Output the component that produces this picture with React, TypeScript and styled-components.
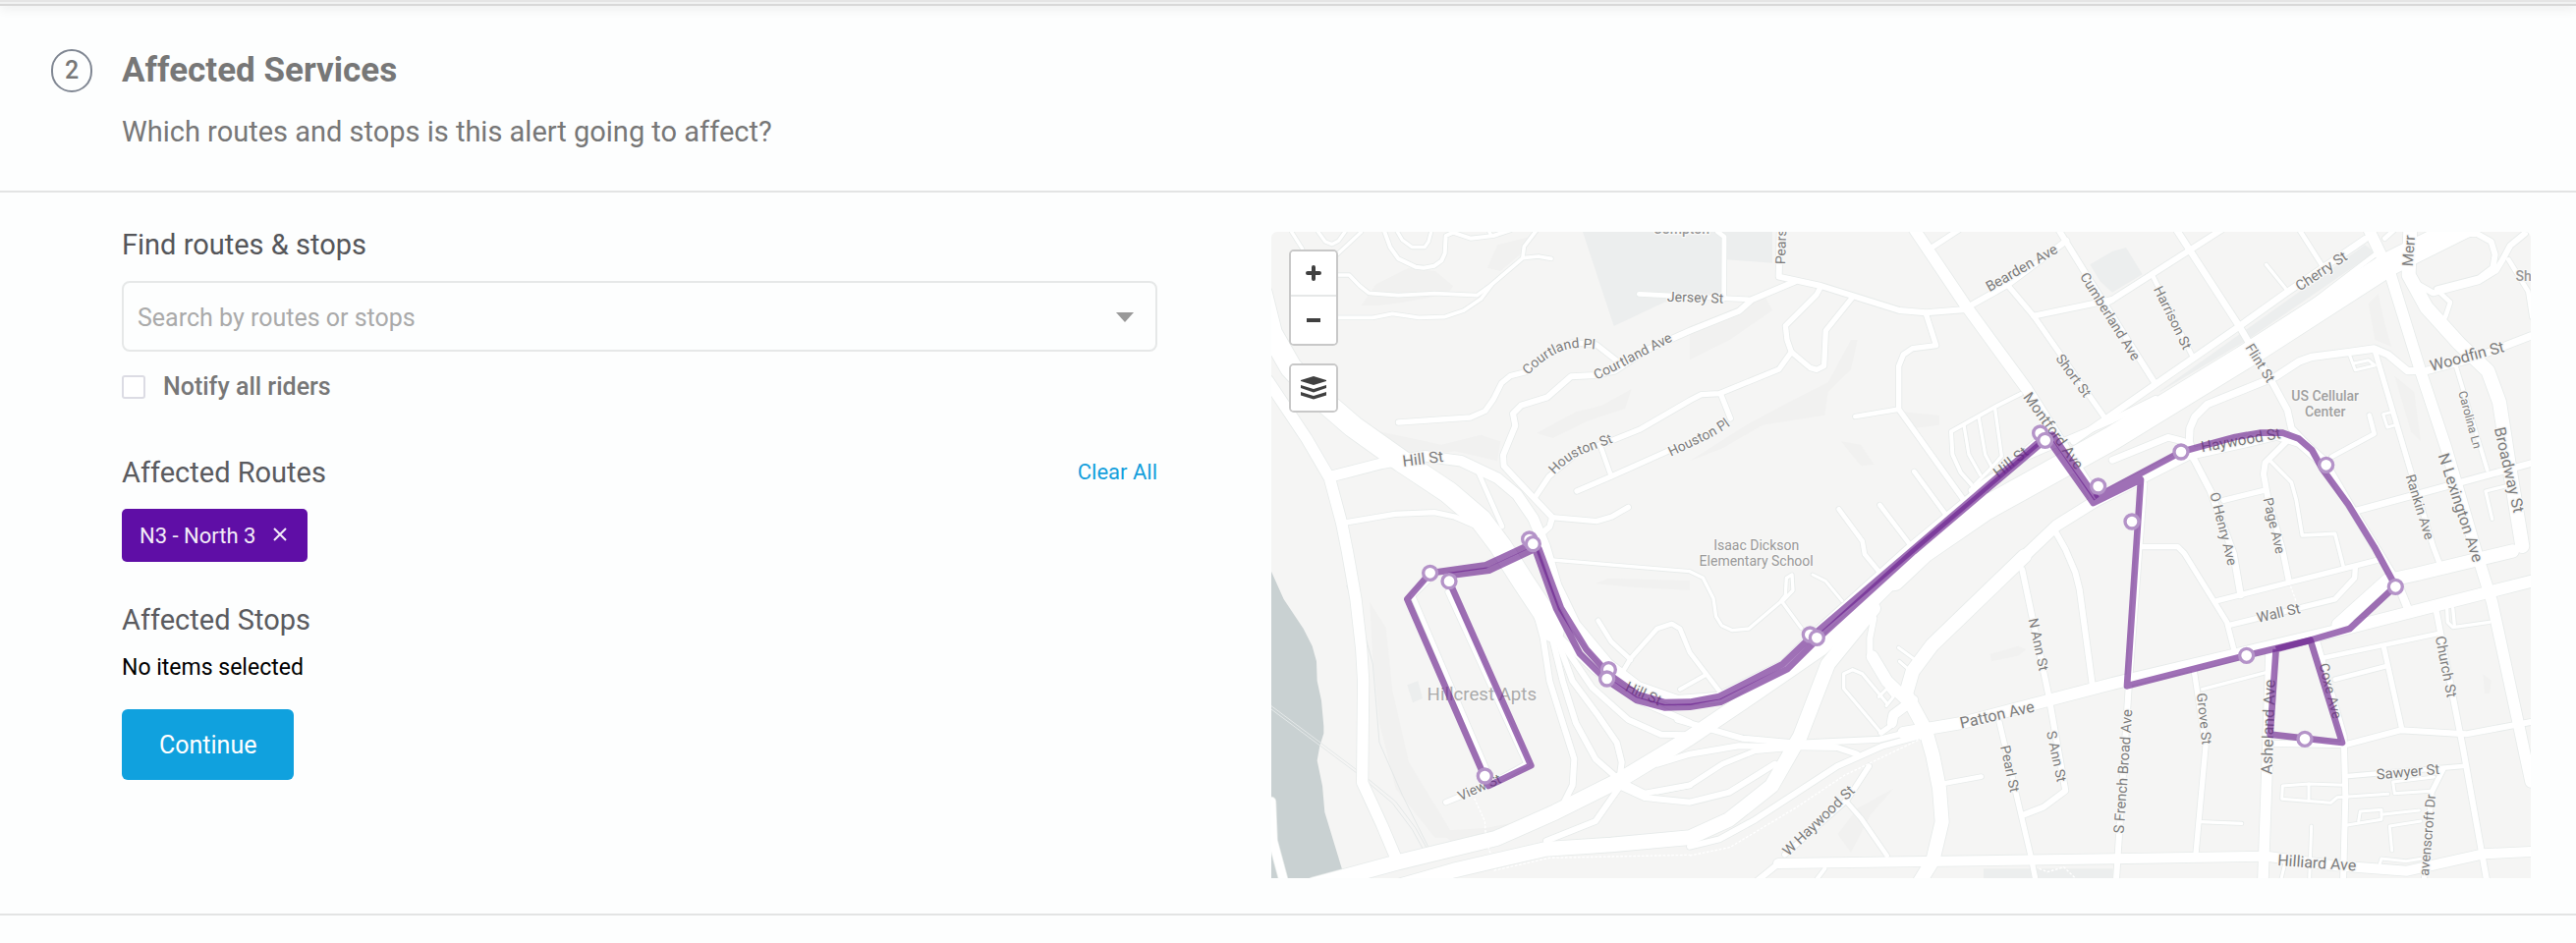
import React, { useState } from "react";
import styled, { createGlobalStyle } from "styled-components";

const GlobalStyle = createGlobalStyle`
  *, *::before, *::after { box-sizing: border-box; }
  body {
    margin: 0;
    background: #fdfefe;
    color: #000;
    font-family: Roboto, "Liberation Sans", sans-serif;
  }
  button, input { font: inherit; }
`;

/* ---------- page ---------- */

const PanelEdge = styled.div`
  height: 6px;
  border-top: 2px solid #e5e5e5;
  border-bottom: 2px solid #d8d8d8;
  background: #f1f2f2;
  box-shadow: 0 2px 12px rgba(0, 0, 0, 0.1);
`;

const Section = styled.section`
  border-bottom: 2px solid #e3e4e4;
`;

const Header = styled.header`
  display: flex;
  align-items: flex-start;
  gap: 30px;
  padding: 44px 46px 42px 52px;
  border-bottom: 2px solid #e3e4e4;
`;

const StepBadge = styled.span`
  display: flex;
  align-items: center;
  justify-content: center;
  width: 42px;
  height: 44px;
  border: 2px solid #808793;
  border-radius: 21px;
  color: #777;
  font-size: 25px;
  font-weight: 500;
  line-height: 40px;
`;

const HeaderText = styled.div`
  display: flex;
  flex-direction: column;
  gap: 22px;
`;

const Title = styled.h2`
  margin: 0;
  color: #777;
  font-size: 35px;
  font-weight: 700;
  line-height: 44px;
`;

const Subtitle = styled.p`
  margin: 0;
  color: #777;
  font-size: 29px;
  line-height: 36px;
`;

const Body = styled.div`
  display: grid;
  grid-template-columns: minmax(0, 1054fr) minmax(0, 1282fr);
  align-items: start;
  gap: 116px;
  padding: 40px 46px 36px 124px;
`;

/* ---------- form ---------- */

const Form = styled.form`
  display: flex;
  flex-direction: column;
  align-items: flex-start;
`;

const FieldLabel = styled.label`
  color: #55565a;
  font-size: 29px;
  line-height: 26px;
`;

const SearchBox = styled.div`
  display: flex;
  align-items: center;
  width: 100%;
  height: 72px;
  margin: 24px 0;
  padding: 0 14px;
  border: 2px solid #e6e8e8;
  border-radius: 8px;
`;

const SearchInput = styled.input`
  flex: 1;
  min-width: 0;
  height: 100%;
  padding: 2px 0 0;
  border: 0;
  outline: 0;
  background: transparent;
  color: #555;
  font-size: 25px;
  &::placeholder { color: #aaa; opacity: 1; }
`;

const CaretButton = styled.button`
  display: flex;
  padding: 10px 8px 8px;
  border: 0;
  background: none;
  cursor: pointer;
`;

const CheckRow = styled.label`
  display: flex;
  align-items: center;
  gap: 18px;
  height: 24px;
  color: #777;
  font-size: 25px;
  font-weight: 500;
  line-height: 24px;
`;

const Checkbox = styled.input`
  appearance: none;
  width: 24px;
  height: 24px;
  margin: 0;
  border: 2px solid #dcdce4;
  border-radius: 3px;
  background: #fff;
  &:checked { background: #10a1de; }
`;

const GroupHeader = styled.div<{ $space: number }>`
  display: flex;
  justify-content: space-between;
  align-items: center;
  width: 100%;
  height: 26px;
  margin: ${(p) => p.$space}px 0 24px;
`;

const GroupTitle = styled.h3`
  margin: 0;
  color: #5a5b5f;
  font-size: 29px;
  font-weight: 400;
  line-height: 26px;
`;

const ClearButton = styled.button`
  padding: 0;
  border: 0;
  background: none;
  color: #149fdc;
  font-size: 22px;
  line-height: 26px;
  cursor: pointer;
`;

const RouteTag = styled.span`
  display: inline-flex;
  align-items: center;
  gap: 18px;
  height: 54px;
  padding: 0 21px 0 18px;
  border-radius: 5px;
  background: #5f0ea6;
  color: #f3ecf8;
  font-size: 22px;
`;

const RemoveButton = styled.button`
  display: flex;
  padding: 0 0 2px;
  border: 0;
  background: none;
  color: inherit;
  cursor: pointer;
`;

const EmptyNote = styled.p`
  margin: 0 0 30px;
  font-size: 23px;
  line-height: 24px;
`;

const ContinueButton = styled.button`
  height: 72px;
  padding: 0 38px;
  border: 0;
  border-radius: 6px;
  background: #10a1de;
  color: #fff;
  font-size: 25px;
  cursor: pointer;
`;

/* ---------- map ---------- */

const MapFrame = styled.div`
  position: relative;
  overflow: hidden;
  aspect-ratio: 1282 / 658;
  border-radius: 6px 6px 0 0;
  background: #f5f5f4;
`;

const MapCanvas = styled.svg`
  display: block;
  width: 100%;
  height: 100%;
`;

const MapControls = styled.div`
  position: absolute;
  top: 18px;
  left: 18px;
  display: flex;
  flex-direction: column;
  gap: 18px;
`;

const ControlGroup = styled.div`
  display: flex;
  flex-direction: column;
  width: 50px;
  border: 2px solid #c8c8c8;
  border-radius: 5px;
  background: #fff;
  overflow: hidden;
`;

const ControlButton = styled.button<{ $height: number }>`
  display: flex;
  align-items: center;
  justify-content: center;
  height: ${(p) => p.$height}px;
  padding: 0;
  border: 0;
  background: #fff;
  color: #404040;
  cursor: pointer;
  & + & { border-top: 2px solid #e6e8e8; }
`;

const CASING = "#e7ebea";
const ROUTE = "#69208d";

/* Map drawing units: 3846 x 1974 */
const parks = [
  "951,0 1046,288 1200,215 1380,190 1390,85 1530,95 1530,0",
  "2500,100 2568,60 2610,48 2660,130 2568,185 2530,150",
  "2715,485 3340,40 3370,62 2980,330 2712,490",
  "2175,1945 2570,1945 2570,1974 2175,1974",
  "415,1384 448,1372 462,1425 432,1438",
];

const relief = [
  "275,225 320,160 420,110 500,120 555,165 540,190 400,215 330,225",
  "660,110 690,40 810,10 770,60 700,120",
  "205,520 330,610 520,650 640,620 700,640 690,700 560,670 420,690 330,640 230,590",
  "810,615 930,550 1010,530 1100,480 1080,540 960,580 860,630",
  "1278,310 1400,240 1510,200 1530,240 1400,330 1278,390",
  "1278,700 1450,590 1600,510 1700,460 1770,330 1790,330 1770,420 1700,490 1690,560 1500,590 1380,660",
  "1740,640 1800,650 1840,710 1800,715",
  "1930,550 2040,560 2040,590 1960,600",
  "990,1075 1030,1058 1278,1065 1278,1095 1100,1085",
  "300,1130 350,1210 370,1400 420,1620 560,1850 500,1850 380,1700 330,1500 310,1300",
  "510,1830 660,1820 760,1800 660,1850 560,1870",
  "2195,1290 2280,1265 2305,1275 2280,1295 2200,1312",
  "1730,1840 1790,1760 1900,1700 1830,1780 1770,1895",
  "3350,220 3380,190 3400,280 3420,350 3370,330",
  "3430,440 3490,490 3510,640 3480,610",
  "3700,1350 3725,1370 3720,1410 3705,1410",
];

const streets: [number, string][] = [
  [10, "62,0 95,52"],
  [10, "143,0 165,30 185,38 205,28 225,0"],
  [10, "275,0 200,70"],
  [12, "346,0 363,47 388,82 440,107 465,110 498,104 520,88 530,66 533,12 555,2 608,20 678,12 730,-5"],
  [10, "663,-5 672,12"],
  [10, "385,0 400,25 430,47 468,47 480,30 488,0"],
  [11, "200,132 238,132 270,165 298,187 388,194 500,188 628,194 668,165 768,80 815,75 855,82"],
  [11, "768,78 772,45 810,-5"],
  [11, "673,162 640,205 588,240 528,260 450,262 370,250 310,262 200,262"],
  [16, "388,582 608,567 653,547 678,512 703,462 730,440 780,427 850,365 920,338 993,345 1063,400"],
  [18, "828,920 850,900 858,872 758,767 710,715 708,682 745,592 738,555 763,530 843,505 915,442 988,438 1048,425 1148,360 1278,302 1428,242 1468,207 1598,152"],
  [16, "858,872 993,884 1040,870 1090,841"],
  [16, "808,807 848,747 938,672 1035,640 1128,602 1278,515 1313,497 1368,494 1550,420 1588,367 1575,330 1570,287 1665,192 1678,167"],
  [16, "933,792 1038,747 1210,670 1300,640"],
  [16, "1402,570 1372,494"],
  [14, "1038,747 1008,662"],
  [16, "225,888 378,862 498,857 560,870 640,905"],
  [14, "633,737 705,900"],
  [14, "1123,190 1468,207"],
  [14, "1363,0 1383,15 1382,205"],
  [18, "1553,-5 1550,137 1678,165 1918,240 1998,247 2112,238 2248,162 2428,27"],
  [16, "1773,202 1693,302 1688,410 1665,421 1645,415 1588,367"],
  [16, "1998,247 2030,347 1958,356 1930,375 1916,410 1916,542 2113,817"],
  [14, "1916,542 1783,564"],
  [14, "1963,732 2060,864"],
  [14, "1858,834 1950,955"],
  [14, "1733,847 1805,945 1812,985 1858,1040"],
  [16, "2018,47 2098,-5"],
  [12, "2288,495 2218,530 2076,610 2080,680 2105,735 2145,780"],
  [10, "2115,590 2130,680 2165,742"],
  [10, "2160,565 2180,680 2200,718"],
  [10, "2210,540 2230,685 2200,720 2150,770"],
  [18, "2405,-5 2488,130 2700,465"],
  [16, "2248,162 2328,257 2548,572"],
  [18, "2328,257 2568,207"],
  [18, "2540,222 2568,207 2803,57 2900,-5"],
  [20, "2450,640 2568,558 2698,467 2958,287 3098,187 3340,22"],
  [14, "2960,360 3180,215 3370,70"],
  [14, "2693,137 2815,385"],
  [10, "3038,100 3103,180"],
  [14, "3140,-5 3208,102"],
  [20, "2765,-5 2958,292 3058,462 3103,545 3115,600 3220,710"],
  [18, "2138,790 2278,700 2568,575 2700,510"],
  [20, "2568,697 2738,628 2785,640 2815,690 2868,792 2938,982 2960,1110"],
  [22, "2815,690 2803,640 2805,600 2820,565 2858,527 3068,442 3140,395 3178,382 3288,368 3368,357 3410,375 3440,400 3470,425 3528,424 3660,390 3846,318"],
  [18, "2398,922 2425,970 2455,1040 2468,1092 2508,1390"],
  [16, "3368,357 3423,542 3548,962 3570,1020"],
  [12, "3618,412 3713,727"],
  [20, "3313,852 3846,707"],
  [10, "3768,777 3708,792 3728,877"],
  [14, "3238,687 3368,617 3353,560"],
  [9, "3293,377 3310,422 3370,408 3350,392 3305,402"],
  [9, "3423,550 3395,557 3408,597 3433,590"],
  [18, "3098,642 3035,705 3030,740 3043,812 3088,972 3108,1070"],
  [16, "2908,820 3030,790"],
  [11, "3053,702 3115,765 3130,820 3148,927 3248,922 3273,1020"],
  [18, "2665,770 2618,1392 2580,1980"],
  [16, "2650,962 2768,962 2788,982 2918,1192 2943,1290"],
  [16, "2888,1127 3388,1000"],
  [16, "2923,1202 3248,1122 3308,1057 3310,1025"],
  [16, "2818,1342 2853,1572 2823,1900"],
  [10, "2843,1397 3033,1347"],
  [10, "2838,1802 2963,1807"],
  [32, "3053,1280 3043,1572 3028,1990"],
  [18, "3048,1562 3278,1567 3448,1522 3648,1534 3846,1497"],
  [18, "3193,1252 3275,1540 3280,1722 3273,1990"],
  [14, "3208,1302 3563,1227"],
  [14, "3248,1367 3403,1327"],
  [16, "3398,1272 3453,1522"],
  [18, "3558,1162 3638,1572 3713,1990"],
  [10, "3590,1150 3592,1192 3608,1208 3720,1192"],
  [10, "3608,1150 3613,1200"],
  [14, "3288,1662 3638,1632"],
  [16, "3578,1642 3543,1712 3520,1980"],
  [9, "3280,1690 3168,1686 3088,1692 3086,1732 3235,1744 3255,1727 3410,1717"],
  [9, "3168,1686 3168,1735"],
  [9, "3550,1665 3425,1680 3430,1715 3540,1708"],
  [9, "3285,1812 3390,1795 3390,1765 3325,1770 3320,1800"],
  [9, "3390,1780 3505,1767"],
  [9, "3510,1800 3415,1815 3422,1890"],
  [9, "3176,1815 3170,1980"],
  [9, "3095,1930 3083,1980"],
  [9, "3385,1930 3390,1914 3465,1922 3510,1915"],
  [16, "1568,1902 1758,1735 1825,1632"],
  [14, "1758,1742 1800,1790 1880,1905"],
  [18, "1480,1985 1548,1930"],
  [12, "1660,1985 1690,1945"],
  [18, "2293,1032 2373,1412 2425,1707 2358,1757 2298,1780"],
  [16, "2223,1497 2318,1902 2335,1985"],
  [14, "2058,1684 2168,1664"],
  [10, "1862,1530 1748,1395 1748,1350 1775,1337 1805,1350 1880,1440"],
  [9, "1855,1420 1880,1395 1900,1420 1878,1448"],
  [9, "1915,1270 1970,1310"],
  [9, "1918,1312 1950,1340"],
  [18, "1840,1180 1828,1240 1828,1292"],
  [16, "1950,1425 1898,1480 1890,1510 1862,1530"],
  [18, "1240,1490 1438,1547 1608,1562 1858,1550 1978,1520"],
  [18, "1180,1625 1278,1595 1428,1570 1728,1575 1788,1595"],
  [18, "1998,1535 1868,1570 1728,1632 1478,1795 1368,1855 1278,1877"],
  [16, "1180,1710 1278,1690 1378,1625 1478,1585 1598,1575"],
  [18, "1068,1695 1140,1728 1278,1742 1398,1712 1538,1625"],
  [10, "858,1002 1278,1037 1318,1057 1350,1120 1358,1175 1375,1202 1408,1217 1458,1212 1553,1132 1570,1110 1573,1057 1590,1047 1593,1095 1560,1130 1618,1210"],
  [9, "1653,1047 1693,1067 1743,1127"],
  [14, "1068,1352 1098,1302 1178,1212 1223,1197 1248,1212 1278,1285 1368,1402"],
  [14, "998,1187 1038,1252 1098,1307"],
  [12, "1248,1397 1328,1352"],
  [16, "533,1742 668,1687 780,1625 540,1100"],
  [14, "485,1060 432,1112 670,1670"],
  [18, "800,1130 830,1240 850,1372 890,1500 925,1610 920,1690 880,1770"],
  [18, "850,1210 890,1372 930,1500 990,1610 1070,1680 1140,1715 1278,1690"],
  [18, "860,1210 920,1372 1000,1480 1055,1560 1070,1620 1060,1700 990,1800 840,1860"],
  [18, "870,1230 980,1392 1090,1490 1190,1535 1278,1537"],
  [20, "870,1230 990,1342 1120,1430 1278,1500"],
  [14, "3570,187 3600,215 3585,260"],
  [14, "3778,85 3838,182 3850,260"],
  [18, "3500,160 3548,187 3688,150 3740,118 3760,85 3783,42 3828,5"],
  [18, "3590,10 3680,5 3725,30 3737,70 3730,110 3688,142 3560,175"],
  [14, "3400,20 3428,-5"],
];

const arterials: [number, string][] = [
  [34, "-10,455 108,632 178,752 215,890 233,980 258,1122 275,1272 281,1372 278,1682 338,1812 388,1930"],
  [32, "183,747 338,707 468,685 580,700 690,752 750,802 800,875 835,960 870,1080 928,1200 1028,1320 1120,1390 1240,1432 1368,1422 1568,1322 1658,1232 1958,962 2358,632"],
  [34, "1962,-10 2118,222 2308,482 2515,810"],
  [34, "2300,990 2398,897 2518,822 2650,755 2798,680 2980,640 3070,618 3140,640 3220,710"],
  [24, "3220,710 3290,830 3440,1075 3470,1150"],
  [42, "2300,990 2018,1262 1958,1342 1938,1412 1998,1522 2020,1600 2040,1700 2048,1802 2020,1920 1980,1985"],
  [36, "1835,1297 1880,1372 1940,1430"],
  [30, "1960,1430 1900,1475 1895,1500"],
  [36, "1930,1530 2108,1500 2568,1380 3288,1210 3856,1065"],
  [40, "3258,1200 3408,1065 3500,1045 3790,975"],
  [34, "3350,-10 3418,132 3508,422 3588,662 3678,972 3728,1132 3808,1502 3846,1680"],
  [42, "3478,-10 3473,132 3528,232 3628,342 3715,425 3750,520 3778,702 3820,960"],
  [30, "1548,1929 2568,1915 3038,1907 3240,1935 3468,1952 3700,1900 3846,1893"],
  [26, "0,1740 5,1860 40,1990"],
];

const motorways: [number, string][] = [
  [66, "-30,190 0,310 60,415 140,500 250,595 400,702 540,795 640,880 700,960 770,1070 830,1160 860,1220"],
  [44, "1838,1150 1700,1320 1615,1540 1528,1692 1398,1795 1278,1850 1038,1872 838,1885 558,1950 400,1995"],
  [46, "130,1995 388,1925 688,1852 868,1772 1068,1672 1278,1545 1478,1410 1678,1272 1838,1122 1990,970 2180,820"],
  [72, "1900,1060 1990,975 2180,845 2568,630 2968,385 3418,95 3650,-20"],
];

const routeLines = [
  "485,1042 655,1018 800,950 818,970 885,1150 962,1275 1032,1352 1118,1413 1200,1437 1278,1436 1368,1419 1562,1320 1650,1235 1960,970 2355,632 2385,620 2520,815",
  "543,1067 543,1050 665,1034 805,968 870,1150 942,1288 1022,1368 1115,1430 1200,1453 1278,1451 1372,1436 1575,1336 1672,1240 1962,976 2370,630 2510,828 2655,757 2613,1387 2978,1294 3173,1247 3293,1212 3433,1082 3368,962 3288,832 3208,722 3178,667 3138,632 3088,614 3018,614 2943,627 2868,647 2778,672 2515,812",
  "485,1042 415,1122 663,1692 793,1630 543,1067",
  "3068,1275 3173,1247 3270,1560 3155,1547 3050,1535 3068,1275",
];

const stops: [number, number][] = [
  [788, 939], [799, 953], [485, 1042], [543, 1067], [1030, 1337], [1025, 1365],
  [652, 1662], [1645, 1230], [1666, 1240], [2348, 615], [2363, 637], [2525, 777],
  [2778, 672], [3221, 712], [2628, 885], [3433, 1084], [2978, 1294], [3156, 1549],
];

type StreetName = { t: string; x: number; y: number; a: number; s: number };
const streetNames: StreetName[] = [
  { t: "Hill St", x: 463, y: 693, a: -7, s: 48 },
  { t: "Jersey St", x: 1295, y: 200, a: 2, s: 42 },
  { t: "Pears", x: 1556, y: 46, a: -88, s: 42 },
  { t: "Bearden Ave", x: 2291, y: 110, a: -30, s: 44 },
  { t: "Cumberland Ave", x: 2562, y: 258, a: 58, s: 42 },
  { t: "Harrison St", x: 2753, y: 262, a: 64, s: 42 },
  { t: "Cherry St", x: 3206, y: 120, a: -34, s: 44 },
  { t: "Flint St", x: 3020, y: 400, a: 58, s: 42 },
  { t: "Short St", x: 2450, y: 439, a: 54, s: 42 },
  { t: "Montford Ave", x: 2388, y: 608, a: 54, s: 46 },
  { t: "Hill St", x: 2258, y: 704, a: -38, s: 46 },
  { t: "Woodfin St", x: 3651, y: 380, a: -15, s: 48 },
  { t: "Merr", x: 3474, y: 58, a: -86, s: 46 },
  { t: "Carolina Ln", x: 3660, y: 574, a: 75, s: 36 },
  { t: "Broadway St", x: 3780, y: 727, a: 77, s: 48 },
  { t: "N Lexington Ave", x: 3632, y: 842, a: 72, s: 48 },
  { t: "Rankin Ave", x: 3508, y: 840, a: 73, s: 42 },
  { t: "O Henry Ave", x: 2908, y: 907, a: 76, s: 42 },
  { t: "Page Ave", x: 3063, y: 897, a: 77, s: 42 },
  { t: "Haywood St", x: 2960, y: 637, a: -10, s: 46 },
  { t: "Wall St", x: 3075, y: 1164, a: -13, s: 44 },
  { t: "Patton Ave", x: 2216, y: 1475, a: -13, s: 48 },
  { t: "N Ann St", x: 2343, y: 1260, a: 78, s: 42 },
  { t: "S Ann St", x: 2398, y: 1602, a: 78, s: 42 },
  { t: "Pearl St", x: 2256, y: 1640, a: 78, s: 42 },
  { t: "W Haywood St", x: 1671, y: 1798, a: -44, s: 44 },
  { t: "S French Broad Ave", x: 2601, y: 1648, a: -86, s: 44 },
  { t: "Grove St", x: 2849, y: 1487, a: 84, s: 42 },
  { t: "Asheland Ave", x: 3044, y: 1512, a: -88, s: 48 },
  { t: "Coxe Ave", x: 3235, y: 1402, a: 76, s: 42 },
  { t: "Church St", x: 3587, y: 1328, a: 79, s: 44 },
  { t: "Sawyer St", x: 3471, y: 1649, a: -5, s: 44 },
  { t: "avenscroft Dr", x: 3530, y: 1842, a: -85, s: 42 },
  { t: "Hilliard Ave", x: 3193, y: 1927, a: 4, s: 48 },
  { t: "View St", x: 635, y: 1696, a: -24, s: 42 },
  { t: "Hill St", x: 1137, y: 1410, a: 24, s: 44 },
];

const curvedNames = [
  { id: "courtland-pl", t: "Courtland Pl", d: "M784,438 Q855,362 930,354 L1050,364" },
  { id: "courtland-ave", t: "Courtland Ave", d: "M993,452 Q1040,430 1100,398 L1270,310" },
  { id: "houston-st", t: "Houston St", d: "M864,742 Q910,692 960,674 L1090,626" },
  { id: "houston-pl", t: "Houston Pl", d: "M1220,686 L1330,634 Q1390,606 1440,560" },
];

const places: { t: string; x: number; y: number; s: number; c: string; w: number }[] = [
  { t: "Compton", x: 1252, y: -8, s: 42, c: "#999", w: 500 },
  { t: "US Cellular", x: 3218, y: 502, s: 42, c: "#a0a0a0", w: 500 },
  { t: "Center", x: 3218, y: 548, s: 42, c: "#a0a0a0", w: 500 },
  { t: "Isaac Dickson", x: 1481, y: 958, s: 42, c: "#999", w: 400 },
  { t: "Elementary School", x: 1481, y: 1004, s: 42, c: "#999", w: 400 },
  { t: "Hillcrest Apts", x: 643, y: 1412, s: 56, c: "#aaa", w: 400 },
  { t: "Sh", x: 3824, y: 135, s: 42, c: "#999", w: 500 },
];

const StreetText = styled.text`
  fill: #7c7c7c;
  stroke: #f8f8f7;
  stroke-width: 8px;
  stroke-linejoin: round;
  paint-order: stroke;
  font-family: Roboto, sans-serif;
`;

function RoadLayer({ lines }: { lines: [number, string][] }) {
  return (
    <g fill="none" strokeLinejoin="round" strokeLinecap="round">
      {lines.map(([w, p], i) => (
        <polyline key={`c${i}`} points={p} stroke={CASING} strokeWidth={w + 5} />
      ))}
      {lines.map(([w, p], i) => (
        <polyline key={`f${i}`} points={p} stroke="#fff" strokeWidth={w} />
      ))}
    </g>
  );
}

function TransitMap() {
  return (
    <MapCanvas viewBox="0 0 3846 1974" preserveAspectRatio="xMidYMid slice" role="img" aria-label="Route map">
      <g fill="#f1f1f0">{relief.map((p) => <polygon key={p} points={p} />)}</g>
      <g fill="#eceeee">{parks.map((p) => <polygon key={p} points={p} />)}</g>
      <polygon
        fill="#c9d1d2"
        points="0,1037 38,1122 98,1212 125,1265 138,1312 140,1372 153,1432 160,1510 160,1532 148,1570 140,1615 156,1692 163,1772 220,1960 215,1974 0,1974"
      />
      <g fill="none" stroke="#e4e8e8" strokeWidth="3">
        <polyline points="0,1448 150,1560 270,1650 380,1740 440,1820 490,1910" />
        <polyline points="0,1458 150,1570 270,1660 370,1745 430,1825 478,1912" />
        <polyline points="230,1080 275,1190 310,1320 330,1560 400,1720 480,1880" />
      </g>
      <RoadLayer lines={[...streets, ...arterials, ...motorways]} />
      <g fill="none" stroke="#fff" strokeWidth="4" strokeDasharray="8 5">
        <polyline points="620,1730 652,1800 656,1860 680,1930" />
        <polyline points="1278,1905 1400,1880 1600,1760 1750,1660 1990,1545" />
        <polyline points="680,1950 850,1912 1278,1903" />
        <polyline points="3108,1070 3130,1130" />
        <polyline points="2345,1945 2370,1955 2420,1940 2455,1974" />
      </g>
      {streetNames.map((n) => (
        <StreetText
          key={n.t + n.x}
          transform={`translate(${n.x} ${n.y}) rotate(${n.a})`}
          fontSize={n.s}
          textAnchor="middle"
          dominantBaseline="central"
        >
          {n.t}
        </StreetText>
      ))}
      {curvedNames.map((n) => (
        <React.Fragment key={n.id}>
          <path id={n.id} d={n.d} fill="none" />
          <StreetText fontSize={42}>
            <textPath href={`#${n.id}`}>{n.t}</textPath>
          </StreetText>
        </React.Fragment>
      ))}
      {places.map((n) => (
        <StreetText
          key={n.t}
          x={n.x}
          y={n.y}
          fontSize={n.s}
          fontWeight={n.w}
          textAnchor="middle"
          dominantBaseline="central"
          style={{ fill: n.c }}
        >
          {n.t}
        </StreetText>
      ))}
      <g fill="none" stroke={ROUTE} strokeOpacity="0.64" strokeWidth="20" strokeLinejoin="round">
        {routeLines.map((p) => <polyline key={p} points={p} />)}
      </g>
      <g fill="#fff" stroke="#b493c8" strokeWidth="10">
        {stops.map(([x, y]) => <circle key={`${x}-${y}`} cx={x} cy={y} r="21" />)}
      </g>
    </MapCanvas>
  );
}

export default function App() {
  const [query, setQuery] = useState("");
  const [notifyAll, setNotifyAll] = useState(false);

  return (
    <>
      <GlobalStyle />
      <PanelEdge />
      <Section>
        <Header>
          <StepBadge>2</StepBadge>
          <HeaderText>
            <Title>Affected Services</Title>
            <Subtitle>Which routes and stops is this alert going to affect?</Subtitle>
          </HeaderText>
        </Header>
        <Body>
          <Form onSubmit={(e) => e.preventDefault()}>
            <FieldLabel htmlFor="search">Find routes &amp; stops</FieldLabel>
            <SearchBox>
              <SearchInput
                id="search"
                type="text"
                placeholder="Search by routes or stops"
                value={query}
                onChange={(e) => setQuery(e.target.value)}
              />
              <CaretButton type="button" aria-label="Show options">
                <svg width="18" height="10" viewBox="0 0 18 10">
                  <path d="M0 0H18L9 10Z" fill="#999" />
                </svg>
              </CaretButton>
            </SearchBox>
            <CheckRow>
              <Checkbox type="checkbox" checked={notifyAll} onChange={(e) => setNotifyAll(e.target.checked)} />
              Notify all riders
            </CheckRow>
            <GroupHeader $space={62}>
              <GroupTitle>Affected Routes</GroupTitle>
              <ClearButton type="button">Clear All</ClearButton>
            </GroupHeader>
            <RouteTag>
              N3 - North 3
              <RemoveButton type="button" aria-label="Remove N3 - North 3">
                <svg width="14" height="14" viewBox="0 0 14 14" stroke="currentColor" strokeWidth="2">
                  <path d="M1 1L13 13M13 1L1 13" />
                </svg>
              </RemoveButton>
            </RouteTag>
            <GroupHeader $space={46}>
              <GroupTitle>Affected Stops</GroupTitle>
            </GroupHeader>
            <EmptyNote>No items selected</EmptyNote>
            <ContinueButton type="submit">Continue</ContinueButton>
          </Form>
          <MapFrame>
            <TransitMap />
            <MapControls>
              <ControlGroup>
                <ControlButton $height={44} type="button" aria-label="Zoom in">
                  <svg width="16" height="16" viewBox="0 0 16 16" stroke="currentColor" strokeWidth="4" strokeLinecap="round">
                    <path d="M2 8H14M8 2V14" />
                  </svg>
                </ControlButton>
                <ControlButton $height={50} type="button" aria-label="Zoom out">
                  <svg width="16" height="16" viewBox="0 0 16 16" stroke="currentColor" strokeWidth="4">
                    <path d="M1 8H15" />
                  </svg>
                </ControlButton>
              </ControlGroup>
              <ControlGroup>
                <ControlButton $height={46} type="button" aria-label="Map layers">
                  <svg width="26" height="24" viewBox="0 0 26 24" fill="currentColor">
                    <path d="M13 0L26 4V5L13 9L0 5V4Z" />
                    <path d="M0 9L13 13L26 9V12L13 16.500L0 12Z" />
                    <path d="M0 16L13 20L26 16V19.500L13 23.500L0 19.500Z" />
                  </svg>
                </ControlButton>
              </ControlGroup>
            </MapControls>
          </MapFrame>
        </Body>
      </Section>
    </>
  );
}
